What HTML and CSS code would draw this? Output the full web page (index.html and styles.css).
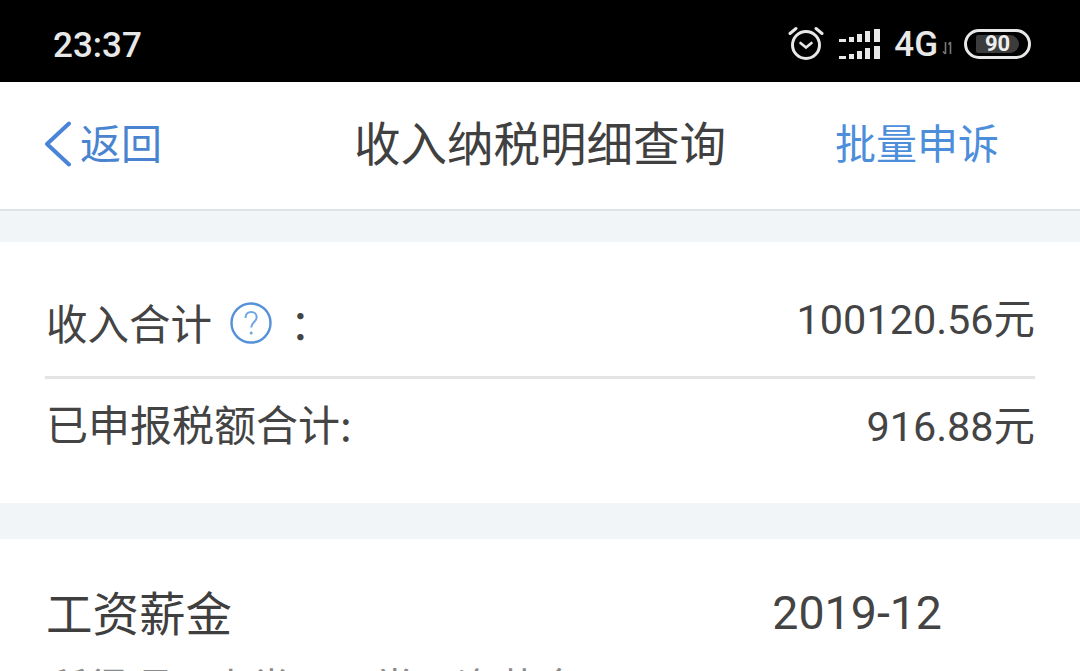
FILE: index.html
```html
<!DOCTYPE html>
<html lang="zh-CN">
<head>
<meta charset="utf-8">
<title>收入纳税明细查询</title>
<link rel="stylesheet" href="styles.css">
</head>
<body>
<div class="page">
  <header class="status">
    <span class="time">23:37</span>
    <div class="status-icons">
      <svg class="alarm" width="36" height="36" viewBox="0 0 36 36" fill="none" stroke="#e8e8e8" stroke-linecap="round">
        <circle cx="18" cy="20" r="13.5" stroke-width="3"/>
        <path d="M12.500 18 18 22.500l5.500-4.500" stroke-width="2.600"/>
        <path d="M2 8.500 8 3.500M34 8.500 28 3.500" stroke-width="3"/>
      </svg>
      <svg class="signal" width="42" height="32" viewBox="0 0 42 32" fill="#e8e8e8">
        <rect x="0" y="11" width="7" height="3"/><rect x="10" y="9" width="5" height="5"/><rect x="18" y="6" width="5" height="8"/><rect x="26" y="3" width="5" height="11"/><rect x="35" y="1" width="6" height="13"/>
        <rect x="0" y="28" width="7" height="3"/><rect x="10" y="26" width="5" height="5"/><rect x="18" y="23" width="5" height="8"/><rect x="26" y="20" width="5" height="11"/><rect x="35" y="18" width="6" height="13"/>
      </svg>
      <span class="net">4G</span>
      <svg class="arrows" width="12" height="14" viewBox="0 0 12 14" fill="none" stroke="#777" stroke-width="1.600"><path d="M3.500 1v12M1 10.500 3.500 13M8.500 13V1M6.500 3.500 8.500 1"/></svg>
      <div class="battery"><span class="battery-fill">90</span></div>
    </div>
  </header>

  <nav class="nav">
    <div class="back">
      <svg width="28" height="46" viewBox="0 0 28 46" fill="none" stroke="#4a84d8" stroke-width="4" stroke-linecap="round" stroke-linejoin="round"><path d="M25 2.500 3 23l22 20.500"/></svg>
      <span>返回</span>
    </div>
    <h1 class="title">收入纳税明细查询</h1>
    <span class="action">批量申诉</span>
  </nav>

  <div class="band band-top"></div>

  <section class="summary">
    <div class="row row-first">
      <div class="label">收入合计
        <svg class="help" width="42" height="42" viewBox="0 0 42 42" fill="none"><circle cx="21" cy="21" r="19.500" stroke="#5590d8" stroke-width="2.400"/><path d="M15.500 16c0-3.800 2.500-6 5.700-6s5.500 2.200 5.500 5.200c0 4.600-5.500 5-5.500 10.300" stroke="#6fa5e2" stroke-width="2"/><circle cx="21.200" cy="31" r="1.500" fill="#6fa5e2"/></svg>
        <span class="colon">：</span>
      </div>
      <span class="value">100120.56元</span>
    </div>
    <div class="row row-second">
      <span class="label label-second">已申报税额合计:</span>
      <span class="value value-second">916.88元</span>
    </div>
  </section>

  <div class="band band-mid"></div>

  <section class="record">
    <div class="record-head">
      <span class="record-name">工资薪金</span>
      <span class="record-date">2019-12</span>
    </div>
    <p class="record-sub">所得项目小类：正常工资薪金</p>
  </section>
</div>
</body>
</html>
```
FILE: styles.css
```css
* { box-sizing: border-box; }
html, body { margin: 0; padding: 0; }
body {
  width: 1080px;
  height: 671px;
  overflow: hidden;
  background: #fff;
  font-family: "Noto Sans CJK SC", Roboto, sans-serif;
  color: #3d3d3d;
}
.page { display: flex; flex-direction: column; height: 671px; overflow: hidden; }

.status {
  height: 82px;
  flex: none;
  background: #000;
  color: #e8e8e8;
  display: flex;
  align-items: center;
  justify-content: space-between;
  padding: 6px 49px 0 53px;
}
.time { font: 500 35px Roboto, sans-serif; margin-top: 2px; }
.status-icons { display: flex; align-items: center; }
.alarm { margin-right: 15px; margin-top: -3px; }
.signal { margin-right: 13px; }
.net { font: 500 35px Roboto, sans-serif; }
.arrows { margin: 8px 10px 0 4px; }
.battery {
  width: 67px;
  height: 30px;
  border: 3px solid #e8e8e8;
  border-radius: 15px;
  padding: 3px 9px;
  display: flex;
}
.battery-fill {
  flex: 1;
  background: #3c3c3c;
  border-radius: 2px 9px 9px 2px;
  color: #eee;
  font: 700 22px/18px Roboto, sans-serif;
  text-align: center;
}

.nav {
  height: 129px;
  flex: none;
  border-bottom: 2px solid #dfe3e6;
  display: grid;
  grid-template-columns: 1fr auto 1fr;
  align-items: center;
  padding: 0 44px 10px;
}
.back { display: flex; align-items: center; gap: 8px; color: #4a84d0; font-size: 41px; }
.back svg { margin-top: 6px; }
.title { margin: 0; font-size: 46.500px; font-weight: 400; color: #404040; line-height: 1.2; }
.action { justify-self: end; margin-right: 37px; color: #4d8edb; font-size: 41px; }

.band { flex: none; background: #f2f5f8; }
.band-top { height: 31px; }
.band-mid { height: 36px; }

.summary { height: 261px; flex: none; padding: 0 45px; }
.row { display: flex; justify-content: space-between; align-items: center; }
.row-first { height: 137px; border-bottom: 3px solid #e3e4e5; padding: 26px 0 0 1px; }
.row-second { height: 90px; padding: 0 0 0 1px; }
.label { display: flex; align-items: center; font-size: 41.500px; color: #444; white-space: nowrap; }
.label-second { font-size: 42px; margin-top: -4px; }
.help { margin-left: 18px; margin-top: 1px; }
.colon { width: 40px; margin-left: 18px; }
.value { font: 41.400px Roboto, "Noto Sans CJK SC", sans-serif; color: #444; margin-top: -12px; }
.value-second { margin-top: -3px; }

.record { padding: 35px 138px 0 46px; }
.record-head { display: flex; justify-content: space-between; align-items: center; }
.record-name { font-size: 46.500px; color: #3f3f3f; line-height: 70px; }
.record-date { font: 46.500px/70px Roboto, sans-serif; color: #444; margin-top: 4px; }
.record-sub { margin: 17px 0 0; font-size: 41px; line-height: 41px; color: #8a8a8a; white-space: nowrap; }
```
